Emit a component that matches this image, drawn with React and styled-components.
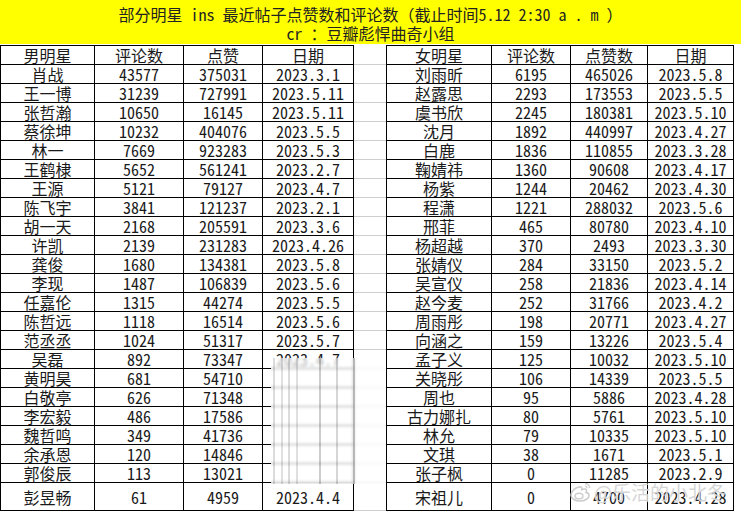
import React from "react";
import styled, { createGlobalStyle } from "styled-components";

const GlobalStyle = createGlobalStyle`
  html, body {
    margin: 0;
    padding: 0;
    background: #fff;
  }
  body {
    font-family: "Noto Sans Mono CJK SC", "Noto Sans CJK SC", monospace;
    color: #111;
  }
`;

const maleStars = [
  ["肖战", "43577", "375031", "2023.3.1"],
  ["王一博", "31239", "727991", "2023.5.11"],
  ["张哲瀚", "10650", "16145", "2023.5.11"],
  ["蔡徐坤", "10232", "404076", "2023.5.5"],
  ["林一", "7669", "923283", "2023.5.3"],
  ["王鹤棣", "5652", "561241", "2023.2.7"],
  ["王源", "5121", "79127", "2023.4.7"],
  ["陈飞宇", "3841", "121237", "2023.2.1"],
  ["胡一天", "2168", "205591", "2023.3.6"],
  ["许凯", "2139", "231283", "2023.4.26"],
  ["龚俊", "1680", "134381", "2023.5.8"],
  ["李现", "1487", "106839", "2023.5.6"],
  ["任嘉伦", "1315", "44274", "2023.5.5"],
  ["陈哲远", "1118", "16514", "2023.5.6"],
  ["范丞丞", "1024", "51317", "2023.5.7"],
  ["吴磊", "892", "73347", "2023.4.7"],
  ["黄明昊", "681", "54710", ""],
  ["白敬亭", "626", "71348", ""],
  ["李宏毅", "486", "17586", ""],
  ["魏哲鸣", "349", "41736", ""],
  ["余承恩", "120", "14846", ""],
  ["郭俊辰", "113", "13021", ""],
  ["彭昱畅", "61", "4959", "2023.4.4"],
];

const femaleStars = [
  ["刘雨昕", "6195", "465026", "2023.5.8"],
  ["赵露思", "2293", "173553", "2023.5.5"],
  ["虞书欣", "2245", "180381", "2023.5.10"],
  ["沈月", "1892", "440997", "2023.4.27"],
  ["白鹿", "1836", "110855", "2023.3.28"],
  ["鞠婧祎", "1360", "90608", "2023.4.17"],
  ["杨紫", "1244", "20462", "2023.4.30"],
  ["程潇", "1221", "288032", "2023.5.6"],
  ["邢菲", "465", "80780", "2023.4.10"],
  ["杨超越", "370", "2493", "2023.3.30"],
  ["张婧仪", "284", "33150", "2023.5.2"],
  ["吴宣仪", "258", "21836", "2023.4.14"],
  ["赵今麦", "252", "31766", "2023.4.2"],
  ["周雨彤", "198", "20771", "2023.4.27"],
  ["向涵之", "159", "13226", "2023.5.4"],
  ["孟子义", "125", "10032", "2023.5.10"],
  ["关晓彤", "106", "14339", "2023.5.5"],
  ["周也", "95", "5886", "2023.4.28"],
  ["古力娜扎", "80", "5761", "2023.5.10"],
  ["林允", "79", "10335", "2023.5.10"],
  ["文琪", "38", "1671", "2023.5.1"],
  ["张子枫", "0", "11285", "2023.2.9"],
  ["宋祖儿", "0", "4700", "2023.4.28"],
];

export default function App() {
  return (
    <>
      <GlobalStyle />
      <Page>
        <TitleBar>
          <div>部分明星 ins 最近帖子点赞数和评论数（截止时间5.12 2:30 a . m ）</div>
          <div>cr ：豆瓣彪悍曲奇小组</div>
        </TitleBar>
        <Body>
          <StarTable
            cols="94px 89px 79px 91px"
            head={["男明星", "评论数", "点赞", "日期"]}
            rows={maleStars}
          />
          <GapColumn>
            {Array.from({ length: maleStars.length + 1 }).map((_, i) => (
              <GapCell key={i} $tall={i === maleStars.length} />
            ))}
          </GapColumn>
          <StarTable
            cols="105px 79px 77px 86px"
            head={["女明星", "评论数", "点赞数", "日期"]}
            rows={femaleStars}
          />
        </Body>
        <Smudge />
        <Watermark>
          <svg width="24" height="22" viewBox="0 0 24 22">
            <path
              d="M10 6c-4.5 1-8 4.6-8 8 0 3.4 3.8 6 9 6 5.4 0 9-2.8 9-5.6 0-2-2-2.8-3-3 1-2 .6-3.6-1.6-3.4-1 .1-2 .6-2.6.8.4-1.6.2-3.4-2.8-2.8z"
              fill="none"
              stroke="#cdcdcd"
              strokeWidth="1.6"
            />
            <ellipse cx="10" cy="15" rx="4" ry="2.8" fill="none" stroke="#cdcdcd" strokeWidth="1.4" />
            <path d="M16 2.5c2.6 0 4.6 2 4.6 4.6" fill="none" stroke="#cdcdcd" strokeWidth="1.4" />
            <path d="M16 5.2c1.2 0 2 .8 2 2" fill="none" stroke="#cdcdcd" strokeWidth="1.2" />
          </svg>
          <span>@乐活的小北冬</span>
        </Watermark>
      </Page>
    </>
  );
}

const StarTable = ({ cols, head, rows }) => {
  return (
    <Sheet $cols={cols}>
      {head.map((h) => (
        <Cell key={h}>{h}</Cell>
      ))}
      {rows.map((r, i) =>
        r.map((v, j) => (
          <Cell key={i + "-" + j} $tall={i === rows.length - 1}>
            {v}
          </Cell>
        ))
      )}
    </Sheet>
  );
};

const Page = styled.div`
  position: relative;
  width: 741px;
  height: 511px;
  overflow: hidden;
  background: #fff;
`;

const TitleBar = styled.div`
  height: 44px;
  background: #ffff00;
  display: flex;
  flex-direction: column;
  align-items: center;
  padding-top: 5px;
  box-sizing: border-box;
  font-size: 16px;
  font-weight: 300;
  line-height: 19px;
  color: #222;
  white-space: pre;
`;

const Body = styled.div`
  display: flex;
  align-items: flex-start;
  padding-top: 1px;
`;

const Sheet = styled.div`
  display: grid;
  grid-template-columns: ${(p) => p.$cols};
  border-left: 1px solid #000;
  border-top: 1px solid #000;
`;

const Cell = styled.div`
  box-sizing: border-box;
  height: ${(p) => (p.$tall ? "28px" : "19px")};
  border-right: 1px solid #000;
  border-bottom: 1px solid #000;
  display: flex;
  align-items: center;
  justify-content: center;
  font-size: 16px;
  font-weight: 300;
  line-height: 17px;
  padding-top: 1px;
  white-space: nowrap;
  color: #1a1a1a;
`;

const GapColumn = styled.div`
  width: 32px;
  display: flex;
  flex-direction: column;
  padding-top: 1px;
`;

const GapCell = styled.div`
  box-sizing: border-box;
  height: ${(p) => (p.$tall ? "28px" : "19px")};
  border-bottom: 1px solid #cfcfcf;
`;

const Smudge = styled.div`
  position: absolute;
  left: 271px;
  top: 358px;
  width: 115px;
  height: 126px;
  backdrop-filter: blur(1.5px);
  background:
    linear-gradient(
      90deg,
      transparent 0 2px,
      rgba(0, 0, 0, 0.14) 2px 4px,
      transparent 4px 10px,
      rgba(0, 0, 0, 0.12) 10px 12px,
      transparent 12px 17px,
      rgba(0, 0, 0, 0.14) 17px 19px,
      transparent 19px 25px,
      rgba(0, 0, 0, 0.12) 25px 27px,
      transparent 27px 48px,
      rgba(0, 0, 0, 0.2) 48px 50px,
      transparent 50px 65px,
      rgba(0, 0, 0, 0.16) 65px 67px,
      transparent 67px 82px,
      rgba(0, 0, 0, 0.22) 82px 84px,
      transparent 84px
    ),
    rgba(255, 255, 255, 0.66);
`;

const Watermark = styled.div`
  position: absolute;
  left: 569px;
  top: 478px;
  display: flex;
  align-items: center;
  gap: 1px;
  font-family: "Noto Sans CJK SC", sans-serif;
  font-size: 19px;
  color: rgba(195, 195, 195, 0.7);
  text-shadow: 0 0 1px #fff;
  pointer-events: none;
  white-space: nowrap;
`;
